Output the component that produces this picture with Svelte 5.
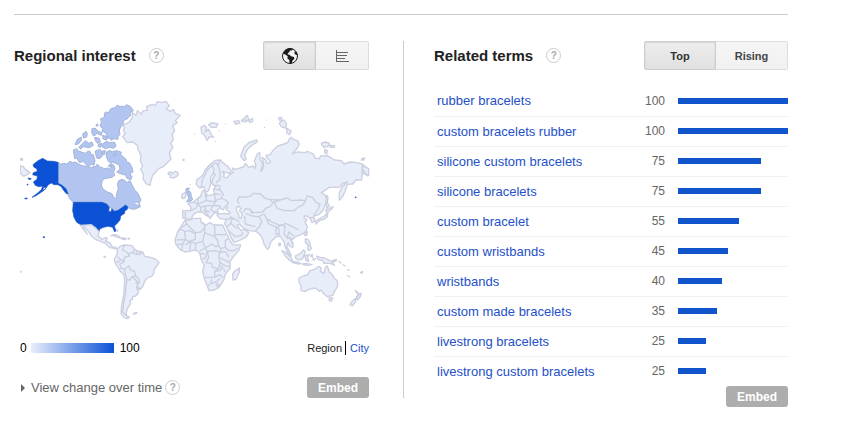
<script lang="ts">
  type Shape = { kind?: string; d: string };
  type Region = { name: string; x: number; y: number; shapes: Shape[] };

  const terms = [
    { label: 'rubber bracelets', value: 100 },
    { label: 'custom bracelets rubber', value: 100 },
    { label: 'silicone custom bracelets', value: 75 },
    { label: 'silicone bracelets', value: 75 },
    { label: 'custom bracelet', value: 55 },
    { label: 'custom wristbands', value: 45 },
    { label: 'wristbands', value: 40 },
    { label: 'custom made bracelets', value: 35 },
    { label: 'livestrong bracelets', value: 25 },
    { label: 'livestrong custom bracelets', value: 25 }
  ];

  // each region is drawn on its own origin, three units to a pixel
  const regions: Region[] = [
    {
      name: 'North America',
      x: -30,
      y: 0,
      shapes: [
        { kind: 'mid', d: 'M144 216L152 223 160 220 170 222 180 214 188 218 196 216 205 222 216 227 232 229 244 233 250 229 256 231 262 222 268 230 276 233 284 236 292 234 302 238 306 230 303 222 310 224 315 234 311 246 314 256 306 262 296 264 284 266 277 272 274 286 279 297 292 306 306 311 312 324 318 326 320 310 325 296 322 284 326 272 336 268 346 272 350 278 360 272 366 284 374 300 384 310 393 330 388 338 378 336 372 342 382 346 388 340 391 350 378 356 368 358 350 352 338 354 328 360 312 364 300 350 276 338 190 338 178 324 172 308 162 292 144 282Z' },
        { kind: 'mid', d: 'M290 186L300 181 306 186 312 184 322 182 334 187 332 194 340 200 348 208 352 218 358 218 366 232 369 246 360 250 366 262 362 270 350 264 346 254 340 254 328 250 320 246 330 238 328 226 318 220 306 216 302 220 294 212 289 200Z' },
        { kind: 'mid', d: 'M272 86L280 84 284 78 283 70 287 66 298 68 298 61 306 54 314 54 322 45 330 50 336 48 342 51 350 44 362 50 370 62 362 68 362 76 350 88 345 88 340 94 340 102 334 108 328 120 330 134 324 138 324 148 312 146 304 151 298 144 291 144 290 134 286 128 276 124 278 116 270 108 274 98Z' },
        { kind: 'mid', d: 'M280 160L290 154 298 158 314 157 318 168 312 175 298 172 286 176 276 170Z' },
        { kind: 'mid', d: 'M190 180L200 176 206 184 214 186 226 190 232 184 240 184 244 194 250 194 255 212 252 226 246 222 236 229 224 220 220 214 208 218 200 204 194 206Z' },
        { kind: 'mid', d: 'M255 184L268 178 274 182 278 196 270 206 260 204ZM276 184L286 182 284 194 278 192ZM197 158L203 147 214 142 214 151 205 162 195 164ZM206 172L218 160 228 152 236 160 246 156 250 166 238 173 220 170 212 177ZM228 124L232 130 230 141 220 144 218 132ZM246 116L255 114 263 122 260 132 251 138 245 128ZM265 124L276 128 274 136 264 132ZM254 142L268 145 271 156 262 160 256 152ZM278 136L292 140 290 150 279 147ZM258 104L263 102 264 108 259 108Z' },
        { kind: 'mid', d: 'M266 162L276 160 272 172 264 170ZM296 226L304 222 304 232 296 230ZM310 182L318 190 314 200 308 192' },
        { kind: 'hot', d: 'M144 217L130 214 112 213 98 205 84 212 69 224 72 232 80 236 82 244 70 248 68 254 82 258 81 268 70 276 76 286 86 290 98 288 94 299 82 310 66 322 78 317 98 304 108 294 115 284 124 279 132 284 144 284 154 290 160 300 168 310 174 312 168 296 156 286 144 280ZM54 264L64 266 60 269 55 267ZM51 283L54 282 54 285 51 285ZM44 325L52 324 50 327 45 327ZM100 293L108 291 105 299 99 300Z' },
        { d: 'M31 227L40 230 46 238 60 248 54 252 46 257 40 258 31 250ZM31 206L37 206 38 210 32 210Z' }
      ]
    },
    {
      name: 'United States and Mexico',
      x: -30,
      y: 270,
      shapes: [
        { kind: 'hot', d: 'M190 67H276L290 72 298 82 296 94 302 96 306 86 312 94 322 92 330 87 340 80 346 75 353 80 352 88 344 94 344 100 332 108 330 120 320 132 313 138 318 152 314 156 308 142 294 139 281 142 269 147 267 154 258 143 244 134 226 136 212 134 200 127 192 112 188 92Z' },
        { kind: 'hot', d: 'M99 170L103 170 104 173 100 173Z' },
        { d: 'M212 136L244 134 258 145 267 155 264 168 276 178 290 172 291 180 286 184 300 188 306 200 318 202 323 208 314 206 300 203 288 192 272 184 256 178 244 168 240 160 228 146 222 140 220 144 232 162 222 150Z' },
        { d: 'M303 167L314 163 326 168 332 174 322 172 310 166ZM336 174L348 175 346 179 336 178ZM354 175L358 175 358 177 354 177ZM282 229L286 229 287 231 283 231ZM28 273L33 274 32 277 28 276ZM320 150L323 150 323 154 320 152Z' }
      ]
    },
    {
      name: 'South America',
      x: 180,
      y: 390,
      shapes: [
        { d: 'M112 102L112 88 120 79 132 75 156 77 164 88 172 93 188 96 194 109 212 112 228 118 237 128 231 138 223 146 221 162 215 169 202 174 194 184 189 198 181 208 171 207 176 216 167 228 157 230 158 238 149 242 152 250 144 262 139 276 139 286 148 292 140 296 130 291 123 280 125 255 131 224 134 184 132 164 120 153 105 128 103 117Z' },
        { kind: 'line', d: 'M132 76L128 90 140 96 148 108 133 112 133 125 122 119 112 110M164 88L158 98 148 99 148 108M188 97L172 104 158 98M172 92L170 103M182 95L181 105M122 119L116 126 108 127M133 125L120 132 122 144 134 148 136 162M134 148L146 138 151 149 164 155 167 168 156 170 150 180 141 180 136 162M156 170L170 182 168 190 178 187 176 176 167 168M178 187L170 199 171 207M170 199L182 208M141 180L138 198 136 224 131 250 128 276 139 287' },
        { d: 'M161 280L171 277 168 281 160 282Z' }
      ]
    },
    {
      name: 'Greenland and Iceland',
      x: 210,
      y: 0,
      shapes: [
        { d: 'M98 140L106 130 100 122 103 112 98 106 116 98 126 85 128 68 138 76 142 62 154 72 160 62 172 61 170 50 186 43 196 47 202 35 216 38 228 34 238 48 228 57 242 64 250 58 256 70 271 76 256 92 262 98 248 107 254 124 246 132 250 148 242 160 249 172 238 188 243 208 230 220 220 230 206 236 194 250 188 256 183 272 180 286 168 281 160 268 160 252 152 238 158 228 151 212 153 196 144 178 142 166 128 156 112 158Z' },
        { d: 'M235 247L242 246 248 250 256 244 264 248 264 256 252 264 240 262 242 255 235 253ZM279 208L282 208 282 211 279 211Z' }
      ]
    },
    {
      name: 'Eurasia',
      x: 450,
      y: 60,
      shapes: [
        { d: 'M79 224L80 210 96 198 106 180 118 165 136 151 152 150 158 158 172 168 184 182 181 189 166 188 158 184 163 194 160 200 170 204 178 194 190 188 188 174 197 178 210 174 222 170 226 160 236 172 250 168 254 176 258 166 253 152 262 132 269 128 270 148 279 164 272 184 278 178 281 160 276 142 286 148 293 162 302 156 293 146 288 136 300 134 312 118 324 108 342 102 353 98 358 88 364 82 370 88 382 92 388 102 382 114 367 132 382 126 406 128 412 124 430 132 436 145 448 146 452 138 472 137 494 150 514 152 522 162 540 156 560 158 576 162 588 171 595 178 594 198 584 192 577 188 575 210 558 210 548 222 532 223 526 242 518 260 508 271 508 248 516 230 532 216 520 220 506 232 478 232 454 248 466 256 472 272 466 284 458 302 446 314 431 318 434 332 426 338 420 324 406 316 401 324 411 329 405 336 412 350 408 364 394 374 376 380 370 387 361 386 370 402 368 412 358 408 355 398 350 410 358 424 364 438 354 430 346 412 342 396 330 378 318 380 302 396 298 412 292 418 282 402 276 382 268 372 258 364 236 362 220 354 208 342 202 346 212 362 224 358 236 368 230 380 212 390 192 398 182 380 170 352 164 342 168 328 150 326 141 316 145 310 134 308 128 314 120 326 113 314 102 300 112 314 115 319 107 316 100 308 92 306 84 306 74 310 68 318 62 328 46 326 38 324 38 302 62 302 63 290 54 281 70 276 80 268 92 258 97 242 104 242 106 254 118 257 134 252 130 238 138 230 130 226 126 218 128 206 136 194 130 190 122 202 122 222 118 236 112 246 104 242 102 230 90 234Z' },
        { kind: 'line', d: 'M94 232L96 212 112 180 130 162 138 158 144 166 150 152M130 192L132 176 126 166M144 166L150 186 150 208 138 218M130 226L148 226 150 240 160 252 154 264 166 270 176 278 168 290M134 238L150 240M134 252L152 254M106 256L110 272 84 282 92 292 104 288M72 278L84 282 78 294 62 302M110 272L136 276 142 268 156 266M136 276L130 286 104 288M130 286L150 288 152 304 132 306 122 298 130 286M104 288L108 302 120 306M92 292L92 304M46 306L46 324M94 260L84 264 84 280M134 254L136 276M152 304L144 310' },
        { kind: 'line', d: 'M208 282L202 272 208 260 226 262 242 258 250 250 272 252 284 264 298 268 310 278 300 290 288 294 278 306 250 308 240 298 226 296 220 306M312 276L330 270 352 264 364 272 390 270 406 272 400 284 384 292 372 302 344 302 322 296 312 276M406 272L412 258 428 262 438 278 450 282 444 298 432 314M298 268L330 270M282 312L290 326 306 336 324 344 340 346 346 340 372 352 386 360M282 312L266 320 276 334 268 350 256 362M226 310L246 318 264 320M224 318L226 342 256 350M180 320L196 328 208 336M168 328L188 324 182 340 170 350M182 340L202 356M290 326L296 342 322 352 336 344 346 350 342 372 352 384 356 366 372 378M318 354L326 356 328 372 318 372ZM352 384L360 382 368 402M176 362L196 380 216 376 218 366M577 162L577 188M420 324L430 322M240 298L246 312' },
        { kind: 'sea', d: 'M142 300L150 294 160 300 164 290 172 291 168 298 180 307 178 312 162 310 146 312ZM199 294L206 288 213 296 208 302 216 310 214 324 207 324 206 312 200 304Z' },
        { kind: 'mid', d: 'M48 236L58 234 54 242 62 246 64 260 68 268 62 274 50 276 56 266 54 256 48 246Z' },
        { d: 'M36 252L46 248 48 258 42 266 35 264ZM93 52L104 46 110 54 106 66 116 58 124 74 131 82 118 80 112 91 102 74 95 68ZM116 44L126 38 144 42 138 52 124 52ZM192 34L206 32 210 39 196 42ZM214 32L220 26 222 36ZM224 22L232 16 236 28 228 36ZM236 32L248 26 248 34 240 38ZM260 90L238 97 222 112 212 138 222 152 228 148 224 136 232 118 248 104 262 96Z' },
        { d: 'M326 24L334 22 336 30 328 30ZM334 34L342 30 350 42 346 54 334 50 328 40ZM350 54L364 64 358 74 350 68ZM454 100L466 96 478 100 476 108 462 112 456 106ZM480 106L494 108 492 112 482 112ZM464 118L472 122 470 132 464 128ZM576 146L584 144 582 150 574 150ZM596 176L596 196 590 194 578 180 578 168Z' },
        { kind: 'line', d: 'M72 72L74 72M146 62L149 62M166 42L168 42M134 94L137 94M282 52L285 52M290 30L292 30M38 150L40 150M60 224L62 222M66 236L66 238' },
        { kind: 'hot', d: 'M555 261L559 261 558 263 556 263Z' },
        { d: 'M470 256L474 262 472 278 478 288 470 294 468 278ZM466 300L480 294 490 290 482 300 472 306ZM474 306L472 320 462 328 450 330 438 342 436 334 452 324 464 318ZM406 366L412 366 410 376 404 376ZM326 400L332 400 330 408 326 406Z' },
        { kind: 'sea', d: 'M108 250L112 258 106 258Z' }
      ]
    },
    {
      name: 'Africa',
      x: 450,
      y: 330,
      shapes: [
        { d: 'M45 60L58 60 72 55 92 55 93 66 108 76 118 68 134 75 158 75 166 92 176 114 188 134 212 135 206 152 192 168 180 184 181 204 166 222 162 238 147 262 132 270 117 272 112 258 102 234 98 212 103 196 94 180 90 162 86 154 74 150 58 154 44 156 30 148 18 134 15 120 22 98 34 78Z' },
        { d: 'M208 204L208 216 198 238 189 240 188 222 194 214Z' },
        { kind: 'line', d: 'M46 60L50 72 32 84 22 98M32 88L44 94 46 118 20 120M50 72L76 98 92 96 104 84 102 72 92 66M44 94L58 92 76 102 76 118 56 124 46 118M104 84L104 98 134 110 134 76M134 104L168 104M104 98L98 124 78 130 62 126 60 152M98 124L106 144 90 152M106 144L126 132 136 140 146 138 142 120 134 110M146 138L152 146 166 142 166 122 176 116M166 142L176 152 192 152 204 144M152 146L152 156 132 152 112 154 106 144M112 154L106 174 96 178M112 154L116 172 108 188 124 190 128 202 146 206 150 188 146 166 152 156M150 174L168 182 178 188M152 156L168 156 176 172M146 206L134 214 134 232 104 232M134 214L150 212 158 202 148 196M134 232L148 224 160 232M124 236L124 250 140 246 150 234M124 250L114 258M150 188L166 198 180 200M46 118L38 130 36 150M20 134L38 132M142 252L148 254 144 260 138 256ZM160 206L166 216M62 126L46 134M78 130L76 150M88 160L104 162' }
      ]
    },
    {
      name: 'Oceania',
      x: 720,
      y: 330,
      shapes: [
        { d: 'M117 234L130 228 143 224 150 212 164 208 176 199 184 204 181 214 192 220 196 202 202 198 208 216 216 222 222 234 232 242 233 258 224 274 218 286 202 290 190 280 184 270 178 274 166 264 146 268 136 274 123 272 123 256 117 246Z' },
        { d: 'M207 294L218 294 214 304 208 302ZM286 272L292 276 296 282 304 280 300 292 292 300 290 290 296 286ZM288 294L286 306 276 318 270 314 276 304Z' },
        { d: 'M66 152L76 156 94 174 98 184 90 182 76 168ZM94 184L110 186 122 190 116 192 98 188ZM106 168L122 160 130 150 136 154 128 176 116 180 108 176ZM134 166L148 164 142 172 146 184 138 182ZM136 116L146 120 150 132 154 146 146 152 142 144 146 138 136 126ZM170 168L180 172 194 174 214 184 224 196 210 190 192 190 188 182 174 178ZM126 192L140 190 156 194 138 196ZM152 168L156 162 158 172ZM218 182L228 178 230 182 220 186ZM236 184L244 190M248 194L256 198M262 208L268 212M262 226L270 232M302 218L308 214 306 220ZM158 178L166 176 164 180Z' }
      ]
    }
  ];

  let view = $state('map');
  let sort = $state('top');
</script>

{#snippet help(label: string)}
  <button class="help" type="button" aria-label={label}>?</button>
{/snippet}

<main class="trends">
  <section class="panel regional">
    <header class="panel-head">
      <h2>Regional interest</h2>
      {@render help('About regional interest')}
      <div class="toggle icons">
        <button type="button" class:active={view === 'map'} aria-label="Map" onclick={() => (view = 'map')}>
          <svg width="18" height="18" viewBox="0 0 18 18">
            <circle cx="9" cy="9" r="7.5" fill="#f5f5f5" stroke="#1b1b1b" />
            <path fill="#1b1b1b" d="M2 6L4.500 2.700 8 1.300 12 1.800 11 3.600 8.800 3.600 8.500 5 7 6 6.600 7.600 8.200 7.500 10 9.200 13 10 13.300 12 11.500 13.500 10.800 16.200 8.500 16.600 8.300 13 6.300 11.200 6.700 9.300 4.600 7.800 2.800 7ZM13.700 4L15.500 5.500 16.500 8 15 8 13.500 6.500Z" />
          </svg>
        </button>
        <button type="button" class:active={view === 'list'} aria-label="List" onclick={() => (view = 'list')}>
          <svg width="14" height="14" viewBox="0 0 14 14" shape-rendering="crispEdges">
            <path fill="none" stroke="#666" d="M1.500 1V13M2 3.500H13M2 6.500H12M2 9.500H10M2 12.500H14" />
          </svg>
        </button>
      </div>
    </header>

    <svg class="map" viewBox="0 0 1050 720" role="img" aria-label="Interest by region">
      {#each regions as region (region.name)}
        <g transform="translate({region.x} {region.y})">
          {#each region.shapes as shape}
            <path class={shape.kind ?? 'land'} d={shape.d} />
          {/each}
        </g>
      {/each}
    </svg>

    <div class="legend">
      <span>0</span>
      <span class="scale"></span>
      <span>100</span>
      <nav class="level">
        <span class="current">Region</span>
        <a href="#city">City</a>
      </nav>
    </div>

    <footer class="panel-foot">
      <button class="over-time" type="button"><span class="arrow"></span>View change over time</button>
      {@render help('About change over time')}
      <button class="embed" type="button">Embed</button>
    </footer>
  </section>

  <section class="panel related">
    <header class="panel-head">
      <h2>Related terms</h2>
      {@render help('About related terms')}
      <div class="toggle">
        <button type="button" class:active={sort === 'top'} onclick={() => (sort = 'top')}>Top</button>
        <button type="button" class:active={sort === 'rising'} onclick={() => (sort = 'rising')}>Rising</button>
      </div>
    </header>

    <table>
      <tbody>
        {#each terms as term (term.label)}
          <tr>
            <td class="term"><a href="#term">{term.label}</a></td>
            <td class="value">{term.value}</td>
            <td class="meter"><div class="bar" style="width: {term.value}%"></div></td>
          </tr>
        {/each}
      </tbody>
    </table>

    <button class="embed" type="button">Embed</button>
  </section>
</main>

<style>
  :global(body) {
    background: #fff;
    color: #222;
    font-family: "Liberation Sans", Arial, sans-serif;
    font-size: 12px;
  }

  .trends {
    display: grid;
    grid-template-columns: 390fr 384fr;
    align-items: start;
    margin: 14px 56px 0 14px;
    padding-top: 26px;
    border-top: 1px solid #ccc;
  }

  button {
    margin: 0;
    padding: 0;
    border: 0;
    background: none;
    font: inherit;
    cursor: pointer;
  }

  a {
    color: #2450c8;
    text-decoration: none;
  }

  .panel {
    display: flex;
    flex-direction: column;
    min-width: 0;
  }

  .regional {
    padding-right: 34px;
    border-right: 1px solid #ccc;
  }

  .related {
    padding-left: 30px;
  }

  .panel-head {
    display: flex;
    align-items: center;
    height: 29px;
  }

  h2 {
    margin: 0 13px 0 0;
    font-size: 15px;
    line-height: 20px;
    color: #222;
  }

  .help {
    box-sizing: border-box;
    width: 15px;
    height: 15px;
    border: 1px solid #ccc;
    border-radius: 50%;
    color: #aaa;
    font-size: 10px;
    font-weight: bold;
    line-height: 13px;
    text-align: center;
  }

  .toggle {
    display: flex;
    margin-left: auto;
  }

  .toggle button {
    display: flex;
    align-items: center;
    justify-content: center;
    box-sizing: border-box;
    width: 72px;
    height: 29px;
    border: 1px solid #dcdcdc;
    border-left: 0;
    border-radius: 0 2px 2px 0;
    background: linear-gradient(#f5f5f5, #f1f1f1);
    color: #444;
    font-size: 11px;
    font-weight: bold;
  }

  .toggle.icons button {
    width: 53px;
  }

  .toggle button:first-child {
    border-left: 1px solid #dcdcdc;
    border-radius: 2px 0 0 2px;
  }

  .toggle button.active {
    border: 1px solid #ccc;
    background: linear-gradient(#eee, #e0e0e0);
    box-shadow: inset 0 1px 2px rgba(0, 0, 0, 0.1);
    color: #333;
  }

  .map {
    display: block;
    width: calc(100% - 5px);
    margin: 20px 0 0 6px;
  }

  .map path {
    stroke: #cbcfdf;
    stroke-width: 4;
    stroke-linejoin: round;
    fill: #e7edf9;
  }

  .map .mid {
    fill: #b1c5f0;
    stroke: #a5b4d8;
    stroke-width: 3;
  }

  .map .hot {
    fill: #0b51d6;
    stroke: #1c54c4;
    stroke-width: 2;
  }

  .map .line {
    fill: none;
  }

  .map .sea {
    fill: #fff;
  }

  .legend {
    display: flex;
    align-items: center;
    height: 16px;
    margin: 10px 0 0 6px;
    color: #000;
  }

  .scale {
    width: 83px;
    height: 10px;
    margin: 0 6px 0 4px;
    background: linear-gradient(to right, #e8eefb, #0b51d6);
  }

  .level {
    display: flex;
    margin-left: auto;
    font-size: 11px;
    line-height: 14px;
  }

  .current {
    padding-right: 3px;
    margin-right: 4px;
    border-right: 1px solid #000;
    color: #222;
  }

  .panel-foot {
    display: flex;
    align-items: center;
    margin: 21px 0 0 7px;
  }

  .over-time {
    display: flex;
    align-items: center;
    margin-right: 3px;
    color: #666;
    font-size: 13px;
  }

  .arrow {
    margin-right: 6px;
    border: 4px solid transparent;
    border-right: 0;
    border-left-color: #666;
  }

  .embed {
    width: 62px;
    height: 21px;
    margin-left: auto;
    border-radius: 3px;
    background: #adadad;
    color: #fff;
    font-size: 12px;
    font-weight: bold;
  }

  table {
    width: 100%;
    margin-top: 16px;
    border-collapse: collapse;
    table-layout: fixed;
  }

  td {
    box-sizing: border-box;
    height: 30px;
    padding: 0;
    border-bottom: 1px solid #eef0f6;
  }

  tr:last-child td {
    border-bottom: 0;
  }

  .term {
    padding-left: 3px;
    font-size: 13px;
  }

  .value {
    width: 40px;
    color: #666;
    text-align: right;
  }

  .meter {
    width: 123px;
    padding-left: 13px;
  }

  .bar {
    height: 6px;
    background: #15c;
  }
</style>
